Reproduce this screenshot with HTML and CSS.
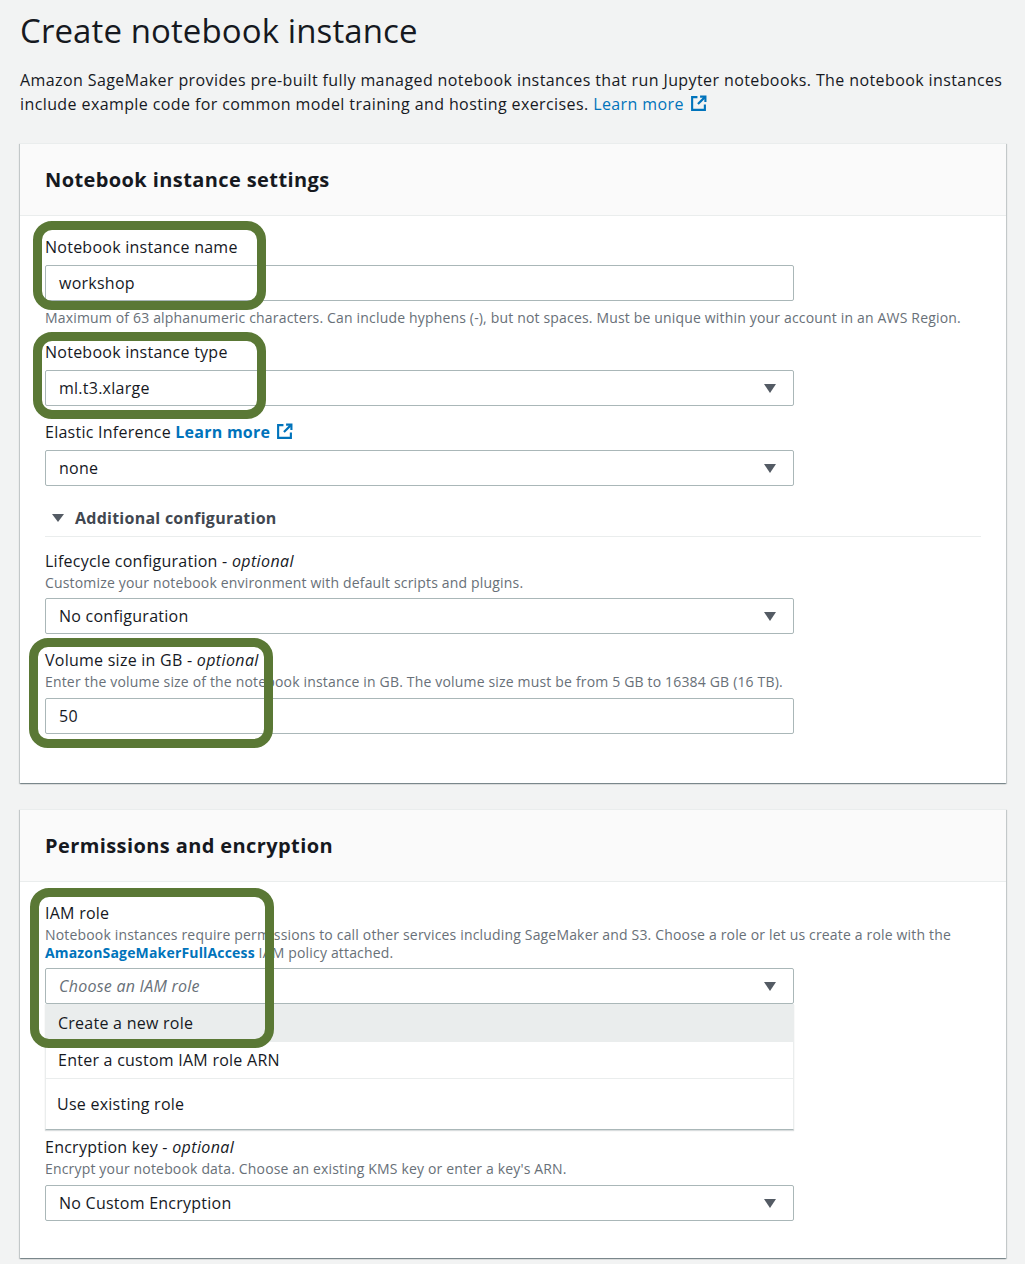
FILE: index.html
```html
<!DOCTYPE html>
<html lang="en">
<head>
<meta charset="utf-8">
<title>Create notebook instance</title>
<link rel="stylesheet" href="styles.css">
</head>
<body>
<div class="page">
  <h1 class="title">Create notebook instance</h1>
  <p class="intro">Amazon SageMaker provides pre-built fully managed notebook instances that run Jupyter notebooks. The notebook instances include example code for common model training and hosting exercises. <a class="link" href="#">Learn more<svg class="ext" viewBox="0 0 16 16" width="17" height="17"><path d="M7 2H2v12h12V9" fill="none" stroke="currentColor" stroke-width="2"/><path d="M9.5 1.5h5v5" fill="none" stroke="currentColor" stroke-width="2"/><path d="M14 2L7.5 8.5" fill="none" stroke="currentColor" stroke-width="2"/></svg></a></p>

  <section class="panel">
    <div class="panel-head"><h2 class="panel-title">Notebook instance settings</h2></div>
    <div class="panel-body panel-body--first">
      <div class="field">
        <div class="label">Notebook instance name</div>
        <div class="control control--input">workshop</div>
        <div class="hint">Maximum of 63 alphanumeric characters. Can include hyphens (-), but not spaces. Must be unique within your account in an AWS Region.</div>
      </div>
      <div class="field field--after-hint">
        <div class="label">Notebook instance type</div>
        <div class="control control--select"><span>ml.t3.xlarge</span><span class="caret"></span></div>
      </div>
      <div class="field">
        <div class="label">Elastic Inference <a class="link link--bold" href="#">Learn more<svg class="ext" viewBox="0 0 16 16" width="17" height="17"><path d="M7 2H2v12h12V9" fill="none" stroke="currentColor" stroke-width="2"/><path d="M9.5 1.5h5v5" fill="none" stroke="currentColor" stroke-width="2"/><path d="M14 2L7.5 8.5" fill="none" stroke="currentColor" stroke-width="2"/></svg></a></div>
        <div class="control control--select"><span>none</span><span class="caret"></span></div>
      </div>
      <div class="expander"><span class="exp-caret"></span>Additional configuration</div>
      <div class="field field--after-expander">
        <div class="label">Lifecycle configuration - <i>optional</i></div>
        <div class="desc">Customize your notebook environment with default scripts and plugins.</div>
        <div class="control control--select"><span>No configuration</span><span class="caret"></span></div>
      </div>
      <div class="field">
        <div class="label">Volume size in GB - <i>optional</i></div>
        <div class="desc">Enter the volume size of the notebook instance in GB. The volume size must be from 5 GB to 16384 GB (16 TB).</div>
        <div class="control control--input control--low">50</div>
      </div>
    </div>
  </section>

  <section class="panel panel--second">
    <div class="panel-head"><h2 class="panel-title">Permissions and encryption</h2></div>
    <div class="panel-body">
      <div class="field">
        <div class="label">IAM role</div>
        <div class="desc">Notebook instances require permissions to call other services including SageMaker and S3. Choose a role or let us create a role with the <a class="link link--bold" href="#">AmazonSageMakerFullAccess</a> IAM policy attached.</div>
        <div class="control control--select"><span class="placeholder">Choose an IAM role</span><span class="caret"></span></div>
        <ul class="menu">
          <li class="opt opt--active">Create a new role</li>
          <li class="opt opt--sep">Enter a custom IAM role ARN</li>
          <li class="opt opt--tall">Use existing role</li>
        </ul>
      </div>
      <div class="field field--tight">
        <div class="label">Encryption key - <i>optional</i></div>
        <div class="desc">Encrypt your notebook data. Choose an existing KMS key or enter a key's ARN.</div>
        <div class="control control--select control--low"><span>No Custom Encryption</span><span class="caret"></span></div>
      </div>
    </div>
  </section>

  <div class="mark mark--1"></div>
  <div class="mark mark--2"></div>
  <div class="mark mark--3"></div>
  <div class="mark mark--4"></div>
</div>
</body>
</html>
```

FILE: styles.css
```css
* { box-sizing: border-box; }

body {
  margin: 0;
  background: #f2f3f3;
  font-family: "Open Sans", "Noto Sans", "Liberation Sans", sans-serif;
  color: #16191f;
}

.page {
  position: relative;
  padding: 0 19px 40px 20px;
}

.title {
  margin: 0;
  padding-top: 10px;
  font-size: 33px;
  font-weight: 400;
  line-height: 42px;
  letter-spacing: 0.1px;
}

.intro {
  margin: 16px 0 0;
  font-size: 16px;
  line-height: 24px;
  letter-spacing: 0.4px;
}

.link {
  color: #0073bb;
  text-decoration: none;
}

.link--bold { font-weight: 700; }

.ext {
  vertical-align: -2px;
  margin-left: 6px;
}

.panel {
  margin-top: 27px;
  width: 986px;
  background: #fff;
  border-top: 1px solid #eaeded;
  box-shadow: 0 1px 1px 0 rgba(0, 28, 36, 0.3), 1px 1px 1px 0 rgba(0, 28, 36, 0.15), -1px 1px 1px 0 rgba(0, 28, 36, 0.15);
}

.panel--second { margin-top: 26px; }

.panel-head {
  height: 72px;
  display: flex;
  align-items: center;
  padding: 0 25px;
  background: #fafafa;
  border-bottom: 1px solid #eaeded;
}

.panel-title {
  margin: 0;
  font-size: 20px;
  line-height: 26px;
  font-weight: 700;
  letter-spacing: 0.4px;
}

.panel-body {
  padding: 20px 25px 37px;
}

.panel-body--first { padding-bottom: 49px; }

.field + .field { margin-top: 15px; }
.field--after-hint { margin-top: 14px !important; }
.field--after-expander { margin-top: 13px; }
.field--tight { margin-top: 6px !important; }

.label {
  font-size: 16px;
  line-height: 22px;
  letter-spacing: 0.25px;
}

.label i { font-style: italic; letter-spacing: 0.4px; }

.desc {
  margin-top: 2px;
  font-size: 14px;
  line-height: 18px;
  color: #687078;
  letter-spacing: 0.17px;
}

.hint {
  margin-top: 8px;
  font-size: 14px;
  line-height: 18px;
  color: #687078;
  letter-spacing: 0.17px;
}

.control {
  width: 749px;
  height: 36px;
  margin-top: 7px;
  padding: 0 17px 0 13px;
  border: 1px solid #aab7b8;
  border-radius: 2px;
  display: flex;
  align-items: center;
  justify-content: space-between;
  font-size: 16px;
  letter-spacing: 0.25px;
  background: #fff;
}

.desc + .control { margin-top: 6px; }
.desc + .control--low { margin-top: 7px; }

.caret {
  width: 0;
  height: 0;
  border-left: 6px solid transparent;
  border-right: 6px solid transparent;
  border-top: 9px solid #545b64;
}

.placeholder {
  color: #687078;
  font-style: italic;
}

.expander {
  margin-top: 21px;
  height: 30px;
  padding-left: 7px;
  display: flex;
  align-items: flex-start;
  font-size: 16px;
  line-height: 22px;
  font-weight: 700;
  color: #414750;
  letter-spacing: 0.25px;
  border-bottom: 1px solid #eaeded;
}

.exp-caret {
  width: 0;
  height: 0;
  margin: 7px 11px 0 0;
  border-left: 6px solid transparent;
  border-right: 6px solid transparent;
  border-top: 8px solid #545b64;
}

.menu {
  list-style: none;
  margin: 0;
  padding: 0;
  width: 749px;
  background: #fff;
  border-left: 1px solid #eaeded;
  border-right: 1px solid #eaeded;
  border-bottom: 1px solid #aab7b8;
  box-shadow: 0 1px 1px rgba(0, 28, 36, 0.15);
}

.opt {
  height: 38px;
  display: flex;
  align-items: center;
  padding-left: 12px;
  font-size: 16px;
  letter-spacing: 0.25px;
}

.opt--active { background: #eaeded; }

.opt--sep {
  height: 37px;
  border-bottom: 1px solid #eaeded;
}

.opt--tall {
  height: 50px;
  padding-left: 11px;
}

.mark {
  position: absolute;
  border: 9px solid #5a7835;
  border-radius: 19px;
}

.mark--1 { left: 33px; top: 221px; width: 233px; height: 89px; }
.mark--2 { left: 33px; top: 332px; width: 233px; height: 87px; }
.mark--3 { left: 29px; top: 638px; width: 244px; height: 110px; }
.mark--4 { left: 30px; top: 888px; width: 244px; height: 160px; }
```
